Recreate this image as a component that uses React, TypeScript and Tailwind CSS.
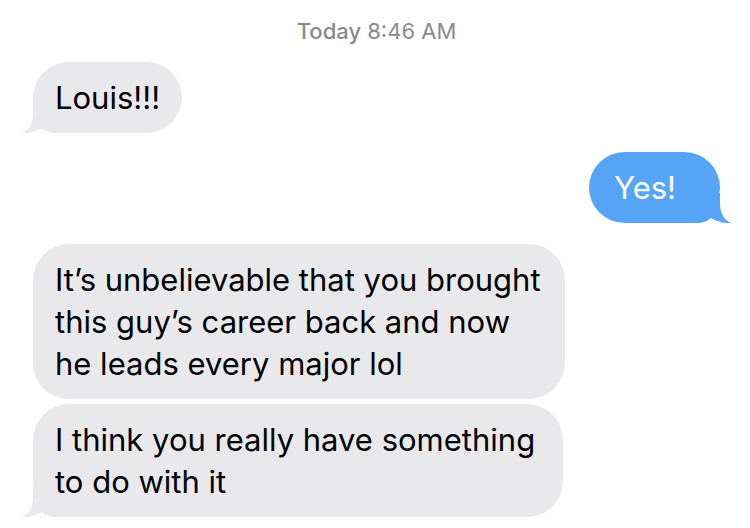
import React from 'react';

const Tail = ({ color, side }: { color: string; side: 'left' | 'right' }) => (
  <svg
    width="50"
    height="30"
    viewBox="0 0 50 30"
    className={
      side === 'left'
        ? 'absolute bottom-0 left-[-11px]'
        : 'absolute bottom-0 right-[-11px] -scale-x-100'
    }
  >
    <path
      d="M11 0 L11 10 C11 20 7 27 0 30 C8 30.5 15 28 20 25 C23 28 28 30 36 30 L50 30 L50 0 Z"
      fill={color}
    />
  </svg>
);

const Bubble = ({
  children,
  me = false,
  tail = false,
  className = '',
}: {
  children: React.ReactNode;
  me?: boolean;
  tail?: boolean;
  className?: string;
}) => (
  <div
    className={`relative rounded-[36px] py-[14.5px] text-[31px] leading-[42px] ${
      me ? 'bg-[#56a4f5] text-white pl-[25px] pr-[44px]' : 'bg-[#e9e9eb] text-black px-[22px]'
    } ${className}`}
  >
    {tail && <Tail color={me ? '#56a4f5' : '#e9e9eb'} side={me ? 'right' : 'left'} />}
    <span className="relative">{children}</span>
  </div>
);

export default function App() {
  return (
    <div
      className="w-[750px] h-[528px] bg-white overflow-hidden flex flex-col pl-[33px] pr-[30px]"
      style={{ fontFamily: 'Inter, "Liberation Sans", sans-serif' }}
    >
      <div className="mt-[17px] text-center text-[22px] leading-[28px] text-[#8a8a8e]">
        <span className="font-medium">Today</span> 8:46 AM
      </div>

      <div className="mt-[17px] flex">
        <Bubble tail>Louis!!!</Bubble>
      </div>

      <div className="mt-[19px] flex justify-end">
        <Bubble me tail>Yes!</Bubble>
      </div>

      <div className="mt-[21px] flex flex-col gap-[5px] items-start">
        <Bubble className="w-[532px]">
          It’s unbelievable that you brought
          <br />
          this guy’s career back and now
          <br />
          he leads every major lol
        </Bubble>
        <Bubble tail className="w-[530px]">
          I think you really have something
          <br />
          to do with it
        </Bubble>
      </div>
    </div>
  );
}
